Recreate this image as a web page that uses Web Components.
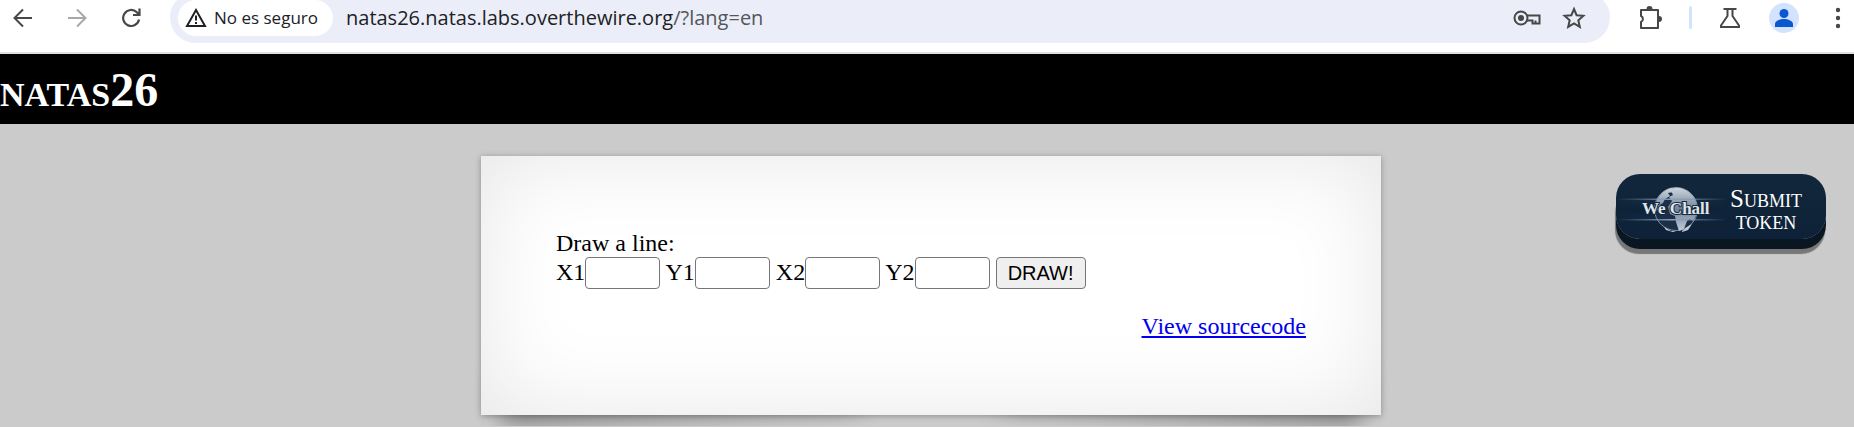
<!DOCTYPE html>
<html lang="en">
<head>
<meta charset="utf-8">
<title>natas26</title>
<style>
html { background: #cbcbcb; }
body { margin: 0; font-family: "Liberation Serif", "Times New Roman", serif; font-size: 24px; }
</style>
</head>
<body>
<browser-bar>
  <span slot="status">No es seguro</span>
  <span slot="host">natas26.natas.labs.overthewire.org</span>
  <span slot="path">/?lang=en</span>
</browser-bar>
<page-title>natas26</page-title>
<page-stage>
  <paper-card><line-form></line-form></paper-card>
  <wechall-button slot="aside">Submit token</wechall-button>
</page-stage>

<script>
function define(name, html) {
  const template = document.createElement("template");
  template.innerHTML = html;
  customElements.define(name, class extends HTMLElement {
    constructor() {
      super();
      this.attachShadow({ mode: "open" }).append(template.content.cloneNode(true));
    }
  });
}

define("browser-bar", `
<style>
:host { display: flex; align-items: flex-end; box-sizing: border-box; height: 54px; padding: 0 8px 9px 10px; background: #fff; border-bottom: 2px solid #dfe1e0; font-family: "Open Sans", "Segoe UI", sans-serif; }
button { display: grid; place-items: center; flex: none; height: 51px; padding: 0; border: 0; background: none; color: #474747; }
svg { display: block; fill: none; stroke: currentColor; stroke-width: 2; }
.nav { width: 26px; margin-right: 28px; }
.nav.reload { margin-right: 26px; }
.nav[disabled] { color: #a8a8a8; }
.box { display: flex; align-items: center; flex: 1; height: 51px; box-sizing: border-box; padding: 0 24px 0 8px; border-radius: 26px; background: #ebeef8; }
.chip { display: flex; justify-content: flex-start; align-items: center; gap: 7px; width: 155px; height: 36px; padding-left: 7px; border-radius: 18px; background: #fff; font: 17px "Open Sans", "Segoe UI", sans-serif; color: #202124; white-space: nowrap; }
.url { flex: 1; padding-left: 13px; font-size: 20px; line-height: 28px; color: #202124; white-space: nowrap; }
.path { color: #53565b; }
.key { width: 30px; margin-right: 20px; }
.star { width: 24px; }
.tools { display: flex; align-items: center; height: 51px; }
.ext { width: 26px; margin-left: 28px; }
.rule { width: 3px; height: 23px; margin: 0 27px 0 25px; border-radius: 2px; background: #d3e3fd; }
.lab { width: 22px; }
.me { width: 30px; margin: 0 31px 0 28px; }
.more { width: 16px; }
</style>
<button class="nav" aria-label="Back"><svg width="20" height="20"><path d="M19 10H2M10 1.500L1.500 10l8.500 8.500"/></svg></button>
<button class="nav" aria-label="Forward" disabled><svg width="20" height="20"><path d="M1 10h17M10 1.500l8.500 8.500-8.500 8.500"/></svg></button>
<button class="nav reload" aria-label="Reload"><svg width="20" height="20"><path d="M18 11.500A8 8 0 1 1 15.800 4.300L18 6.500M18.500 .5V7H12" stroke-width="2.200"/></svg></button>
<div class="box">
  <button class="chip"><svg width="22" height="20"><path d="M11 2L20 18H2zM11 7.500v5M11 14v2"/></svg><slot name="status"></slot></button>
  <div class="url"><slot name="host"></slot><span class="path"><slot name="path"></slot></span></div>
  <button class="key" aria-label="Passwords"><svg width="28" height="18"><circle cx="8" cy="9" r="6.500"/><circle cx="8" cy="9" r="2" fill="currentColor"/><path d="M14 6.500h12.500v8h-4v-3M14 11.500h5.500v3h3"/></svg></button>
  <button class="star" aria-label="Bookmark"><svg width="24" height="24"><path d="M12 3l2.600 6.200 6.800.6-5.100 4.500 1.500 6.600L12 17.400l-5.800 3.500 1.500-6.600L2.600 9.800l6.800-.6z"/></svg></button>
</div>
<div class="tools">
  <button class="ext" aria-label="Extensions"><svg width="26" height="26"><path d="M3 5h17v18H3v-6a3.300 3.300 0 0 0 0-6z" stroke-linejoin="round"/><path d="M8.500 4a3 3 0 0 1 6 0zM21 11a3 3 0 0 1 0 6z" fill="currentColor" stroke="none"/></svg></button>
  <span class="rule"></span>
  <button class="lab" aria-label="Labs"><svg width="22" height="22"><path d="M4.500 2h13M8.500 2v7L2 18.500V20h18v-1.500L13.500 9V2"/></svg></button>
  <button class="me" aria-label="Profile"><svg width="30" height="30"><circle cx="15" cy="15" r="15" fill="#d3e3fd" stroke="none"/><circle cx="15" cy="10.500" r="4.500" fill="#0b57d0" stroke="none"/><path d="M6 24v-3c0-3 5-5 9-5s9 2 9 5v3z" fill="#0b57d0" stroke="none"/></svg></button>
  <button class="more" aria-label="Menu"><svg width="6" height="22"><path d="M3 .8a2.200 2.200 0 1 1 0 4.400 2.200 2.200 0 0 1 0-4.400M3 8.800a2.200 2.200 0 1 1 0 4.400 2.200 2.200 0 0 1 0-4.400M3 16.800a2.200 2.200 0 1 1 0 4.400 2.200 2.200 0 0 1 0-4.400" fill="currentColor" stroke="none"/></svg></button>
</div>`);

define("page-title", `
<style>
:host { display: block; background: #000; color: #fff; }
h1 { margin: 0; padding-top: 2px; font-size: 48px; line-height: 68px; font-variant: small-caps; }
</style>
<h1><slot></slot></h1>`);

define("page-stage", `
<style>
:host { display: grid; grid-template-columns: 1fr minmax(0, 900px) 1fr; align-items: start; padding: 32px 0 11px 8px; }
.main { grid-column: 2; }
.aside { justify-self: end; padding: 18px 28px 0 0; }
</style>
<main class="main"><slot></slot></main>
<aside class="aside"><slot name="aside"></slot></aside>`);

define("paper-card", `
<style>
:host { display: block; position: relative; z-index: 0; }
.paper { box-sizing: border-box; padding: 74px 75px 75px; background: #fff; box-shadow: 0 1px 6px rgba(0,0,0,.3), 0 0 90px rgba(0,0,0,.1) inset; }
:host::before, :host::after { content: ""; position: absolute; z-index: -1; bottom: 22px; width: 50%; max-width: 360px; height: 20%; box-shadow: 0 24px 24px rgba(0,0,0,.34); }
:host::before { left: 18px; transform: rotate(-3deg); }
:host::after { right: 18px; transform: rotate(3deg); }
</style>
<div class="paper"><slot></slot></div>`);

define("line-form", `
<style>
:host { display: block; line-height: 27px; }
form { margin: 0; }
input { box-sizing: border-box; width: 75px; height: 32px; padding: 1px 3px; border: 1px solid #767676; border-radius: 4px; background: #fff; font: 20px "Liberation Sans", Arial, sans-serif; vertical-align: baseline; }
button { box-sizing: border-box; width: 90px; height: 32px; padding: 0; border: 1px solid #767676; border-radius: 4px; background: #efefef; color: #000; font: 20px "Liberation Sans", Arial, sans-serif; }
.source { margin-top: 24px; text-align: right; }
a { color: #00e; }
</style>
<form>Draw a line:<br>
<label for="x1">X1</label><input id="x1" name="x1">
<label for="y1">Y1</label><input id="y1" name="y1">
<label for="x2">X2</label><input id="x2" name="x2">
<label for="y2">Y2</label><input id="y2" name="y2">
<button>DRAW!</button></form>
<div class="source"><a href="index-source.html">View sourcecode</a></div>`);

define("wechall-button", `
<style>
:host { display: block; }
button { display: flex; align-items: center; box-sizing: border-box; width: 210px; height: 65px; padding: 6px 22px 0 0; border: 0; border-radius: 24px; background: linear-gradient(#12273b, #0d2238); box-shadow: 0 10px 0 #0a1722, -1px 15px 1px #777; color: #fff; font: 25px/22px "Liberation Serif", "Times New Roman", serif; font-variant: small-caps; }
.label { flex: 1; text-align: center; }
.logo { flex: none; display: block; font: bold 17px "Liberation Serif", "Times New Roman", serif; font-variant: normal; }
</style>
<button>
<svg class="logo" width="112" height="48" viewBox="0 0 112 48">
  <defs>
    <linearGradient id="streak"><stop offset="0" stop-color="#6d8199" stop-opacity="0"/><stop offset=".5" stop-color="#8ea0b4"/><stop offset="1" stop-color="#6d8199" stop-opacity="0"/></linearGradient>
    <linearGradient id="land" x2="0" y2="1"><stop offset="0" stop-color="#cdd5df"/><stop offset=".5" stop-color="#71839a"/><stop offset="1" stop-color="#c3ccd8"/></linearGradient>
    <linearGradient id="band" x2="0" y2="1"><stop offset="0" stop-color="#173450"/><stop offset=".5" stop-color="#0b1d34"/><stop offset="1" stop-color="#173450"/></linearGradient>
    <linearGradient id="fade"><stop offset="0" stop-color="#fff" stop-opacity="0"/><stop offset=".5" stop-color="#fff"/><stop offset="1" stop-color="#fff" stop-opacity="0"/></linearGradient>
    <mask id="edge"><rect width="112" height="48" fill="url(#fade)"/></mask>
  </defs>
  <path d="M0 14h112v20H0z" fill="url(#band)" mask="url(#edge)"/>
  <circle cx="60" cy="23" r="21.500" fill="#1b3048" stroke="#8292a6"/>
  <path fill="url(#land)" d="M41 14c3-6 8-11 15-12l4 1-3 3-5 1 2 3-5 3-2 4-3 2 1 4-5 2-2-3zM58 2c5-1 12 1 16 5 4 3 7 8 7 15 0 5-1 9-4 13l-3-2-3 2-3 8-5 2-3-9-1-6-5-2-2-7 4-6-3-4 4-2-2-4z"/>
  <path d="M66 45l5-4 5-3-4 6-6 2zM48 41l7 4h5l-3 1-7-2z" fill="#c3ccd8"/>
  <path d="M0 12.500h112v1.500H0zM0 33h112v1.500H0z" fill="url(#streak)"/>
  <text x="26" y="28" fill="#e0e5eb" stroke="#11253b" stroke-width="2" paint-order="stroke">We Chall</text>
</svg>
<span class="label"><slot></slot></span></button>`);
</script>
</body>
</html>
